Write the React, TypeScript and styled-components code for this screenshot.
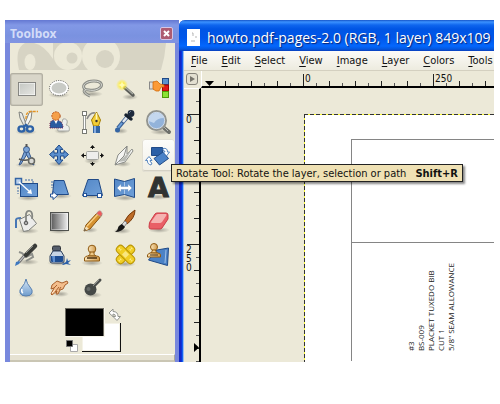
import React from "react";
import styled, { createGlobalStyle, css } from "styled-components";

const face = "#ece9d8";
const uiFont = '"DejaVu Sans Condensed", "DejaVu Sans", sans-serif';

const GlobalStyle = createGlobalStyle`
  * { box-sizing: border-box; }
  body { margin: 0; background: #fff; font-family: ${uiFont}; font-size: 11px; color: #111; }
  button { font: inherit; color: inherit; border: 0; padding: 0; margin: 0; background: none; }
`;

const Desktop = styled.main`
  display: flex;
  padding: 20px 6px 0 5px;
  overflow: hidden;
`;

const ToolboxWindow = styled.section`
  flex: none;
  display: flex;
  flex-direction: column;
  background: #7888dd;
  padding: 0 4px 0 5px;
`;

const ToolboxTitle = styled.header`
  display: flex;
  align-items: center;
  justify-content: space-between;
  height: 23px;
  margin: 0 -4px 0 -5px;
  padding: 4px 6px 0 5px;
  background: linear-gradient(#6478d2, #8298e6 5px, #7a92e0 16px, #8194e2);
  font: bold 12px/16px "Noto Sans", sans-serif;
  color: #d3dcf8;
  h2 { font: inherit; margin: 0; }
`;

const CloseButton = styled.button`
  width: 13px;
  height: 13px;
  border: 1px solid #d5c5e4;
  border-radius: 2px;
  background: #ad5b71;
  svg { display: block; }
`;

const ToolboxBody = styled.div`
  background: ${face};
  svg { display: block; }
`;

const ToolGrid = styled.div`
  display: grid;
  grid-template-columns: repeat(5, 33px);
  grid-auto-rows: 33px;
`;

const ToolCell = styled.div`
  position: relative;
`;

const ToolButton = styled.button<{ $state?: "active" | "hover" }>`
  display: block;
  width: 33px;
  height: 33px;
  border-radius: 3px;
  ${(p) => p.$state === "active" && css`
    background: #d9d6c9;
    box-shadow: inset 0 0 0 1px #b3b0a3, inset 0 0 0 2px #cbc8bb;
  `}
  ${(p) => p.$state === "hover" && css`
    background: linear-gradient(#fdfdfb, #f1efe6);
    box-shadow: inset 0 0 0 1px #e3e0d4, inset 0 -2px 0 #d4d1c4;
  `}
`;

const Tooltip = styled.div`
  position: absolute;
  z-index: 5;
  left: 29px;
  top: 25px;
  display: flex;
  gap: 9px;
  height: 18px;
  padding: 0 4px;
  border: 1px solid #222;
  background: #efe1b4;
  box-shadow: 2px 2px 2px #0007;
  font-size: 11px;
  line-height: 17px;
  white-space: nowrap;
`;

const ColorArea = styled.div`
  display: grid;
  height: 50px;
  padding: 4px 0 0 55px;
  svg { display: block; }
`;

const Dock = styled.div`
  height: 8px;
  border-top: 1px solid #fff;
  border-bottom: 2px solid #cac6b4;
  border-right: 1px solid #aaa798;
  background: #e6e2d2;
`;

const ImageWindow = styled.section`
  flex: 1;
  min-width: 0;
  display: flex;
  flex-direction: column;
  padding-left: 5px;
  background: linear-gradient(90deg, #1428c4 0 2px, #0b33dc 2px 3px, #1464ee 3px 4px, #9bbcf0 4px 5px);
  border-top-left-radius: 6px;
`;

const ImageTitle = styled.header`
  display: flex;
  align-items: center;
  gap: 7px;
  flex: none;
  height: 31px;
  margin-left: -5px;
  padding: 4px 0 0 8px;
  overflow: hidden;
  border-top-left-radius: 6px;
  background: linear-gradient(#1554c8, #3b92ff 2px, #0f66ee 5px, #0055e4 9px, #0056ea 18px, #0367fd 26px, #0458e0 29px, #0a3fbd);
  color: #fff;
  h1 {
    margin: 0;
    font: 500 14px/20px "Open Sans", "Noto Sans", sans-serif;
    white-space: nowrap;
    text-shadow: 1px 1px 1px #0a2470;
  }
  svg { flex: none; }
`;

const MenuBar = styled.nav`
  display: flex;
  gap: 14px;
  flex: none;
  height: 20px;
  padding-left: 7px;
  overflow: hidden;
  background: linear-gradient(#fcfbf8, #edebdf);
  border-bottom: 1px solid #d4d0c0;
  button { flex: none; line-height: 20px; height: 19px; }
  u { text-underline-offset: 2px; }
`;

const Workspace = styled.div`
  flex: 1;
  display: grid;
  grid-template-columns: 17px minmax(0, 1fr);
  grid-template-rows: 17px 1fr;
  background: ${face};
`;

const Corner = styled.button`
  width: 12px;
  height: 12px;
  margin: 2px;
  border: 1px solid #85837a;
  border-radius: 3px;
  background: #e3e0d1;
  svg { display: block; }
`;

const HRuler = styled.div`
  position: relative;
  display: grid;
  grid-auto-flow: column;
  grid-auto-columns: 130px;
  padding-left: 103px;
  overflow: hidden;
  border-bottom: 2px solid #000;
  border-left: 1px solid #fff;
  font-size: 10px;
  line-height: 15px;
  background:
    repeating-linear-gradient(90deg, #222 0 1px, transparent 1px 130px) 101px 3px / 100% 12px no-repeat,
    repeating-linear-gradient(90deg, #222 0 1px, transparent 1px 26px) 23px 10px / 100% 5px no-repeat,
    repeating-linear-gradient(90deg, #555 0 1px, transparent 1px 13px) 23px 12px / 100% 3px no-repeat;
`;

const VRuler = styled.div`
  position: relative;
  display: grid;
  grid-auto-rows: 130px;
  padding: 26px 0 0 2px;
  border-right: 2px solid #000;
  border-top: 1px solid #fff;
  font-size: 10px;
  line-height: 9px;
  overflow: hidden;
  height: 100%;
  max-height: 274px;
  span { width: 7px; word-break: break-all; }
  background:
    repeating-linear-gradient(#222 0 1px, transparent 1px 130px) 3px 25px / 12px 100% no-repeat,
    repeating-linear-gradient(#222 0 1px, transparent 1px 26px) 10px 25px / 5px 100% no-repeat,
    repeating-linear-gradient(#555 0 1px, transparent 1px 13px) 12px 12px / 3px 100% no-repeat;
`;

const RulerMarker = styled.svg<{ $side: "top" | "left" }>`
  position: absolute;
  ${(p) => (p.$side === "top" ? "left: 3px; bottom: 0;" : "right: 0; bottom: 10px;")}
`;

const Canvas = styled.div`
  display: grid;
  padding: 26px 0 0 103px;
`;

const Paper = styled.div`
  display: grid;
  grid-template-rows: 103px 1fr;
  padding: 25px 0 1px 47px;
  background:
    repeating-linear-gradient(90deg, #333 0 4px, #ffff3a 4px 6px) 0 0 / 100% 1px no-repeat,
    repeating-linear-gradient(#333 0 4px, #ffff3a 4px 6px) 0 0 / 1px 100% no-repeat,
    #fff;
`;

const Piece = styled.div`
  display: flex;
  align-items: flex-end;
  padding: 0 0 10px 54px;
  border: solid #858585;
  border-width: 1px 0 0 1px;
`;

const PieceLabel = styled.p`
  margin: 0;
  writing-mode: vertical-rl;
  transform: rotate(180deg);
  font: 8px/10px "Noto Sans", sans-serif;
  font-family: "Open Sans", sans-serif;
  color: #222;
  white-space: nowrap;
`;

const blue = "#3465a4";
const Sheet = { fill: "url(#sheet)", stroke: "#204a87" };

const Defs = () => (
  <defs>
    <linearGradient id="sheet" x1="0" y1="0" x2="1" y2="1"><stop stopColor="#5488c7" /><stop offset="1" stopColor="#6f9fd8" /></linearGradient>
    <linearGradient id="metal" x1="0" y1="0" x2="1" y2="1"><stop stopColor="#c4c7c2" /><stop offset="1" stopColor="#e6e6e2" /></linearGradient>
    <linearGradient id="ramp"><stop stopColor="#555" /><stop offset="1" stopColor="#f4f4f4" /></linearGradient>
    <linearGradient id="wood" x1="0" y1="0" x2="1" y2="0"><stop stopColor="#fbe6bb" /><stop offset="1" stopColor="#d09a4c" /></linearGradient>
    <radialGradient id="glow"><stop stopColor="#fffff0" /><stop offset=".4" stopColor="#fcec4f" /><stop offset="1" stopColor="#fcec4f" stopOpacity="0" /></radialGradient>
    <linearGradient id="water" x1="0" y1="0" x2="0" y2="1"><stop stopColor="#d8e8f8" /><stop offset="1" stopColor="#6f9ccc" /></linearGradient>
    <radialGradient id="shade"><stop stopColor="#000" stopOpacity=".3" /><stop offset="1" stopColor="#000" stopOpacity="0" /></radialGradient>
  </defs>
);

const Shade = ({ y = 25, x = 16, r = 11 }: { y?: number; x?: number; r?: number }) => (
  <ellipse cx={x} cy={y} rx={r} ry="3" fill="url(#shade)" />
);

type Tool = { name: string; art: React.ReactNode; state?: "active" | "hover"; tip?: boolean };

const tools: Tool[] = [
  { name: "Rectangle Select", state: "active", art: <><rect x="9" y="10" width="16" height="12" fill="url(#metal)" stroke="#fff" /><rect x="8.500" y="9.500" width="17" height="13" fill="none" stroke="#222" strokeDasharray="1 1" /></> },
  { name: "Ellipse Select", art: <><Shade y={22} /><ellipse cx="16" cy="15" rx="8.500" ry="6.500" fill="#c9cbc6" stroke="#fff" strokeWidth="2" /><ellipse cx="16" cy="15" rx="9.500" ry="7.500" fill="none" stroke="#555" strokeDasharray="1 1.3" /></> },
  { name: "Free Select", art: <><Shade y={21} /><g fill="none"><path d="M10 17C4 13 10 8 18 8s10 5 4 8-10 0-13 1 2 5 5 6" stroke="#8a8c85" strokeWidth="3" /><path d="M10 17C4 13 10 8 18 8s10 5 4 8-10 0-13 1 2 5 5 6" stroke="#d8d9d3" /></g></> },
  { name: "Fuzzy Select", art: <><Shade y={24} x={21} r={8} /><path d="M15 14l9 8" stroke="#5b5d59" strokeWidth="3.4" strokeLinecap="round" /><path d="M16 14l8 7" stroke="#aaada6" strokeWidth="1.2" /><circle cx="13" cy="12" r="6" fill="url(#glow)" /><path d="M13 8l1 3 3 1-3 1-1 3-1-3-3-1 3-1z" fill="#fffbb0" /></> },
  { name: "Select by Color", art: <><rect x="20.500" y="5.500" width="6" height="6" fill="#5b91cf" stroke="#204a87" /><rect x="20.500" y="12" width="6" height="6" fill="#e01818" stroke="#a40000" /><rect x="20.500" y="18.500" width="6" height="6" fill="#8ae234" stroke="#4e9a06" /><rect x="7.500" y="9" width="4" height="7" fill="#ddd" stroke="#888" /><path d="M11 9l4-1 3 3 4 1v2h-3l-2 4h-3l-3-2z" fill="#fb9a37" stroke="#d2690a" strokeWidth=".8" /></> },
  { name: "Scissors Select", art: <><Shade y={26} /><path d="M9 6l3 1 4 11-2 2-4-8z" fill="#e8e9e6" stroke="#82847f" /><path d="M22 5l-3 2-4 10 2 3 4-7z" fill="#f6f6f4" stroke="#82847f" /><path d="M16 13c0-5 1-7 4-7.500h8" fill="none" stroke="#e59320" strokeWidth="1.300" strokeDasharray="3 1" /><g fill="none" stroke="#2d62a7" strokeWidth="2.400"><ellipse cx="11.500" cy="23" rx="3" ry="2.600" /><ellipse cx="20" cy="23" rx="3" ry="2.600" /><path d="M13 21l3-2 2 2" /></g></> },
  { name: "Foreground Select", art: <><Shade y={25} x={19} r={8} /><path d="M20 13c5-1 5 4 3 6 3 0 4 3 3 6H15c-1-4 1-6 3-6z" fill="#eeeeec" stroke="#a6a8a3" /><path d="M7 22v-5q1-3 5-3t6 2 2 6z" fill="#2c5ba0" stroke="#702050" strokeDasharray="1 1" /><path d="M11 14l2 4 2-4z" fill="#fff" /><circle cx="13" cy="10" r="4.200" fill="#f5a04a" stroke="#b4521c" strokeDasharray="2 1" /></> },
  { name: "Paths", art: <><path d="M8.500 8v17" stroke="#999b95" strokeWidth="3" /><path d="M8.500 8v17" stroke="#fff" /><path d="M11 13Q14 6 19 7" fill="none" stroke="#888" strokeWidth="1.500" /><g fill="#fff" stroke="#777973"><rect x="6.500" y="5.500" width="4" height="4" /><rect x="6.500" y="23.500" width="4" height="4" /></g><path d="M20.500 6l4 8-2 6h-5l-2-6z" fill="#f2cc35" stroke="#a47e04" /><path d="M20.500 7v7" stroke="#fff7b8" strokeWidth="1.500" /><circle cx="20.500" cy="15" r="1.200" fill="#333" /><path d="M17 20h7v7h-7z" fill={blue} /><path d="M18 20h2v7h-2z" fill="#86ace0" /></> },
  { name: "Color Picker", art: <><Shade y={25} x={12} r={7} /><path d="M19 10L9 22" stroke="#3a5f94" strokeWidth="4" /><path d="M19 10l-5 6" stroke="#e3e8ee" strokeWidth="2.500" /><path d="M13 17l-4 5" stroke="#6ca0dc" strokeWidth="2" /><ellipse cx="8.500" cy="24" rx="2.500" ry="2.500" fill={blue} /><path d="M17 9l5 4" stroke="#17212f" strokeWidth="3.500" strokeLinecap="round" /><circle cx="22" cy="7.500" r="3.400" fill="#1d2a3d" /><path d="M20 7l2-2" stroke="#6b7990" /></> },
  { name: "Zoom", art: <><Shade y={26} x={19} /><path d="M21 21l6 5" stroke="#6e706b" strokeWidth="4" strokeLinecap="round" /><path d="M22 21l4 4" stroke="#b9bbb6" /><circle cx="14.500" cy="14.500" r="9.500" fill="#93b3da" stroke="#92948f" strokeWidth="2" /><path d="M6.500 15A8 8 0 0 1 22 12Q15 12 12 17z" fill="#c4d7ee" /><circle cx="14.500" cy="14.500" r="8.200" fill="none" stroke="#e6ebf0" strokeWidth=".7" /></> },
  { name: "Measure", art: <><Shade y={26} /><path d="M15 11l-6 15 2-1 6-10z" fill="#7ba3d5" stroke="#34568a" /><path d="M18 11l6 15-2-1-6-10z" fill="#7ba3d5" stroke="#34568a" /><path d="M9 20q7 3 14-1" stroke="#555" strokeWidth="1.600" fill="none" /><circle cx="16.500" cy="10.500" r="3" fill="#7ba3d5" stroke="#34568a" /><path d="M16.500 5v3" stroke="#555" strokeWidth="2" /><circle cx="21.500" cy="22" r="3" fill="#d9dad7" stroke="#666863" strokeWidth="1.500" /></> },
  { name: "Move", art: <><Shade y={25} /><path d="M16 6l4 4.500h-2.500V14H21v-2.500l4.500 4-4.500 4V17h-3.500v4H20l-4 4.500-4-4.500h2.500v-4H11v2.500l-4.500-4 4.500-4V14h3.500v-3.500H12z" fill="#5b8fce" stroke="#1f4b8b" /></> },
  { name: "Align", art: <><Shade y={22} r={8} /><rect x="10.500" y="12.500" width="12" height="8" rx="1" fill="#eeeeec" stroke="#a3a59f" /><g fill="#111"><path d="M16.500 6l2.500 3h-5zM16.500 27l2.500-3h-5zM5 16.500l3-2.500v5zM28 16.500l-3-2.500v5z" /><path d="M16 8h1v2h-1zM16 23h1v2h-1zM8 16h2v1H8zM24 16h2v1h-2z" /></g></> },
  { name: "Crop", art: <><Shade y={25} x={14} r={8} /><path d="M6 26l3-10 9-9v8l5-5 1 2-8 11z" fill="#f4f4f2" stroke="#8b8d88" /><path d="M6 26l9-9 3-10" fill="none" stroke="#8b8d88" /><path d="M9 23l6-5 3-3 5-5-7 12z" fill="#b8bab5" /></> },
  { name: "Rotate", state: "hover", tip: true, art: <><path d="M9.500 8.500h11v8h-11z" fill="#2b5fa6" stroke="#204a87" /><path d="M12 19.500l9-6.500 5.500 6.500-9 6.500z" fill="#4a82c8" stroke="#204a87" /><path d="M21 9.500q4.500-1 4.500 3.500h2l-3 4-3.500-4h2q0-1.500-2-1.500zM9 26q-4-1-3.500-4.500h-2L7 17.500l3 4H8q0 2 2 2.500z" fill="#fff" stroke="#4a7dbb" strokeWidth=".9" /></> },
  { name: "Scale", art: <><Shade y={26} x={18} /><rect x="10.500" y="11.500" width="17" height="13" {...Sheet} /><path d="M15 8h8v3M8 15v7" fill="none" stroke="#3e6ba8" strokeDasharray="2 1" /><rect x="5.500" y="6.500" width="6" height="6" fill="#bcd3ee" stroke={blue} strokeWidth="1.500" /><path d="M9 10l11 10" stroke="#fff" strokeWidth="1.300" /><path d="M22 22l-5-1 4-4z" fill="#fff" /></> },
  { name: "Shear", art: <><Shade y={24} x={18} /><path d="M11 8.500h10l4.500 14H9.500z" {...Sheet} /><path d="M9 9v7" stroke="#3e6ba8" strokeDasharray="2 1" /><path d="M7.500 22h2.500v-2.500l4.500 4-4.500 4V25H7.500z" fill="#fff" stroke="#245398" /></> },
  { name: "Perspective", art: <><Shade y={24} /><path d="M12 7.500h10.500l4 16h-20z" {...Sheet} /><g fill="#fff" stroke="#245398"><rect x="7.500" y="21.500" width="3" height="3" /><rect x="21.500" y="21.500" width="4" height="4" /></g></> },
  { name: "Flip", art: <><Shade y={26} /><path d="M5.500 7l10 2.500 10-3v19l-10-3-10 2z" {...Sheet} /><path d="M15.500 10v12" stroke="#adc8e8" /><path d="M8 16l4-4v2.500h7V12l4 4-4 4v-2.500h-7V20z" fill="#fff" stroke="#7294c0" strokeWidth=".5" /></> },
  { name: "Text", art: <><Shade y={25} /><text x="16.500" y="25" textAnchor="middle" fontFamily="DejaVu Sans" fontWeight="bold" fontSize="27" fill="#303331" stroke="#303331">A</text></> },
  { name: "Bucket Fill", art: <><Shade y={26} x={18} /><path d="M6 23v-8q0-2 5-2" fill="none" stroke="#4777b5" strokeWidth="2" /><path d="M9.500 14.500l10-5 7 9-8 7-5 1z" fill="#ececea" stroke="#7d7f7a" /><path d="M16 17V9q1-4 4-3t2 8" fill="none" stroke="#858782" strokeWidth="1.800" /><circle cx="16" cy="18" r="1.800" fill="#aaa" stroke="#555" /></> },
  { name: "Blend", art: <><Shade y={26} /><rect x="7.500" y="7.500" width="18" height="18" fill="url(#ramp)" stroke="#50524e" /><rect x="8.500" y="8.500" width="16" height="16" fill="none" stroke="#fff" strokeOpacity=".4" /></> },
  { name: "Pencil", art: <><Shade y={25} x={14} r={8} /><path d="M8 26l2-6L22 7l4 3-12 14z" fill="#d5912f" stroke="#85500e" /><path d="M11 21l11-12" stroke="#f8cf83" strokeWidth="1.300" /><path d="M20.500 8.500L22.500 6q2-1 3 1l1 2-2 2.500z" fill="#ee5b5b" stroke="#aaa" strokeWidth=".7" /><path d="M8 26l2-5 3 3z" fill="#f3dfb8" /><path d="M8 26l1-2 1 1z" fill="#222" /></> },
  { name: "Paintbrush", art: <><Shade y={26} x={13} r={9} /><path d="M15 17q4-8 11-12 0 8-8 14z" fill="#bd6c28" stroke="#793b0b" /><path d="M12 20l4-4 2 2-3 4z" fill="#ddd" stroke="#888" /><path d="M13 19l3 3q-3 5-10 5 3-2 3-4t4-4z" fill="#171717" /></> },
  { name: "Eraser", art: <><Shade y={25} x={17} /><path d="M7.500 17.500L13 9q1-1 2-1h9q2 0 2 2v4l-6 9q-1 1-2 1h-9q-2 0-2-2z" fill="#e95f66" stroke="#cb3d47" /><path d="M9 17l5-7q1-1 2-1h8q1 1 0 2l-4 6q-1 1-2 1h-8q-1 0-1-1z" fill="#f5b3b1" /></> },
  { name: "Airbrush", art: <><Shade y={24} x={18} /><path d="M9 14l3 1 4 4 6-3 1 3-7 4" fill="none" stroke="#8d8f8a" strokeWidth="2" /><path d="M15 17l-6 7" stroke="#777" strokeWidth="3" /><path d="M15 17l-6 7" stroke="#ddd" /><path d="M16 17l9-9" stroke="#393b38" strokeWidth="4.500" strokeLinecap="round" /><path d="M16 15l7-7" stroke="#8b8d88" /><path d="M5 28l1-4 3-1q2 1 0 3z" fill="#3e78bf" /></> },
  { name: "Ink", art: <><Shade y={25} x={15} /><rect x="9.500" y="8" width="8" height="5" rx="1.500" fill="#555d6b" stroke="#2a2e35" /><path d="M10 13h8l3 5v5q0 2-2 2H9q-2 0-2-2v-5z" fill="#c7d4e4" stroke="#2c3f5c" /><path d="M8 18h12v5q0 1-1 1H9q-1 0-1-1z" fill="#1e4d92" /><path d="M9 18h3v6h-2z" fill="#5f8fd0" /><path d="M19 26l4-2 1-4 1 3 3-1-3 3 3 2-5-1-3 1z" fill="#2b5fa8" /></> },
  { name: "Clone", art: <><Shade y={25} /><circle cx="16" cy="11" r="3.800" fill="url(#wood)" stroke="#8f5a12" /><path d="M14 14q1 3-2 4h8q-3-1-2-4z" fill="#eec987" stroke="#8f5a12" /><path d="M8.500 23v-3q1-2 3-2h9q3 0 3 2v3z" fill="url(#wood)" stroke="#8f5a12" /><path d="M11 20h10" stroke="#4d3211" strokeWidth="1.500" /></> },
  { name: "Heal", art: <><Shade y={26} /><g fill="#f0cd24" stroke="#b99504"><rect x="5.500" y="12.500" width="22" height="8" rx="3.500" transform="rotate(-45 16.500 16.500)" /><rect x="5.500" y="12.500" width="22" height="8" rx="3.500" transform="rotate(45 16.500 16.500)" /></g><path d="M16.500 13l3.500 3.500-3.500 3.500-3.500-3.500z" fill="#f9e680" /><path d="M10 10l2 2m9 9l2 2m0-13l-2 2m-9 9l-2 2" stroke="#fcef9c" strokeDasharray="1 1" strokeWidth="2" /></> },
  { name: "Perspective Clone", art: <><path d="M15 12l11.500-2-1 17.500L6.500 22z" {...Sheet} fill="#4b82c6" /><path d="M24 12l-1 13" stroke="#9ec0e8" /><circle cx="12" cy="9" r="3.500" fill="url(#wood)" stroke="#8f5a12" /><path d="M10.500 12q0 2-2 3h7q-2-1-2-3z" fill="#eec987" stroke="#8f5a12" /><path d="M5.500 19v-2q1-2 3-2h7q3 0 3 2v2z" fill="url(#wood)" stroke="#8f5a12" /><path d="M8 17h8" stroke="#4d3211" /></> },
  { name: "Blur / Sharpen", art: <><Shade y={24} x={17} r={9} /><path d="M16 8q1 5 4 8 3 3 2 6-1 3-6 3t-6-3q-1-3 2-6 3-3 4-8z" fill="url(#water)" stroke="#5880b0" /><path d="M12 18q-1 3 1 4" stroke="#fff" strokeWidth="1.500" fill="none" /></> },
  { name: "Smudge", art: <><Shade y={23} x={18} r={8} /><path d="M24 10l-5 2-5-2-5 4-1 4 3-1-3 6 1 1 5-4-1 3 2 0 2-4 3-1 2-4 3-2z" fill="#f3bd8b" stroke="#a9602c" /><path d="M11 17l3-3m-2 7l4-5m0 3l2-3" stroke="#a9602c" fill="none" /><path d="M9 22l3-3" stroke="#ffe4c8" /></> },
  { name: "Dodge / Burn", art: <><Shade y={24} x={17} r={9} /><path d="M17 16l7-7" stroke="#4a4d4b" strokeWidth="3" strokeLinecap="round" /><circle cx="14.500" cy="18.500" r="6" fill="#454947" /><path d="M17 15l6-6" stroke="#8b8e8b" /><circle cx="12.500" cy="18" r="2" fill="#676b69" /></> },
];

const menus = ["File", "Edit", "Select", "View", "Image", "Layer", "Colors", "Tools"];

const WilberBanner = () => (
  <svg width="165" height="30" viewBox="0 0 165 30" aria-hidden="true">
    <path d="M15 0h141q-1 14-5 27H9Q4 6 15 0z" fill="#d7d4c4" />
    <path d="M24 0q10 2 19 16V0z" fill={face} />
    <ellipse cx="20" cy="19" rx="5.500" ry="8" fill={face} />
    <circle cx="58" cy="13" r="14" fill={face} />
    <circle cx="62" cy="15" r="5.500" fill="#d7d4c4" />
    <circle cx="91" cy="13" r="19" fill={face} />
    <circle cx="95" cy="16" r="9" fill="#d7d4c4" />
    <path d="M0 27h165v3H0z" fill={face} />
  </svg>
);

export default function App() {
  return (
    <Desktop>
      <GlobalStyle />
      <ToolboxWindow>
        <ToolboxTitle>
          <h2>Toolbox</h2>
          <CloseButton aria-label="Close">
            <svg width="11" height="11" viewBox="0 0 11 11"><path d="M3 3l5 5m0-5l-5 5" stroke="#fff" strokeWidth="2" /></svg>
          </CloseButton>
        </ToolboxTitle>
        <ToolboxBody>
          <WilberBanner />
          <svg width="0" height="0"><Defs /></svg>
          <ToolGrid>
            {tools.map((t) => (
              <ToolCell key={t.name}>
                <ToolButton $state={t.state} aria-label={t.name}>
                  <svg width="33" height="33" viewBox="0 0 33 33">{t.art}</svg>
                </ToolButton>
                {t.tip && (
                  <Tooltip role="tooltip">
                    <span>Rotate Tool: Rotate the layer, selection or path</span>
                    <b>Shift+R</b>
                  </Tooltip>
                )}
              </ToolCell>
            ))}
          </ToolGrid>
          <ColorArea>
            <svg width="60" height="45" viewBox="0 0 60 45" role="img" aria-label="Foreground and background colors">
              <path d="M17 15h39v29H17z" fill="#111" /><path d="M17 15h38v28H17z" fill="#f5f3e8" /><path d="M18 16h36v26H18z" fill="#fff" />
              <path d="M0 0h40v29H0z" fill="#f7f5ec" /><path d="M0 0h39v28H0z" fill="#6d6b62" /><path d="M1 1h37v27H1z" fill="#000" />
              <path d="M5.500 36.500h7v7h-7z" fill="#fff" stroke="#aaa" /><path d="M1.500 32.500h6v6h-6z" fill="#000" stroke="#777" />
              <path d="M44 5l4-4v2.500q5 0 5 5h2.500L52 12.500 48 8.500h2.500q0-2.500-2.500-2.500v2.500z" fill="#fff" stroke="#92948f" />
            </svg>
          </ColorArea>
          <Dock />
        </ToolboxBody>
      </ToolboxWindow>
      <ImageWindow>
        <ImageTitle>
          <svg width="13" height="17" viewBox="0 0 13 17" aria-hidden="true"><path d="M0 0h13v17H0z" fill="#fff" /><path d="M5 4h1v3M4 12h4M9 7v2" stroke="#b5b5b5" fill="none" /></svg>
          <h1>howto.pdf-pages-2.0 (RGB, 1 layer) 849x109</h1>
        </ImageTitle>
        <MenuBar>
          {menus.map((m) => (
            <button key={m}><u>{m[0]}</u>{m.slice(1)}</button>
          ))}
        </MenuBar>
        <Workspace>
          <Corner aria-label="Image menu">
            <svg width="10" height="10" viewBox="0 0 10 10"><path d="M3 2l5 3-5 3z" fill="#77756c" /></svg>
          </Corner>
          <HRuler>
            <RulerMarker $side="top" width="9" height="5" viewBox="0 0 9 5"><path d="M0 0h9L4.500 5z" /></RulerMarker>
            <span>0</span><span>250</span>
          </HRuler>
          <VRuler>
            <span>0</span><span>250</span>
            <RulerMarker $side="left" width="5" height="9" viewBox="0 0 5 9"><path d="M0 0v9l5-4.500z" /></RulerMarker>
          </VRuler>
          <Canvas>
            <Paper>
              <Piece />
              <Piece>
                <PieceLabel>#3<br />BS-009<br />PLACKET TUXEDO BIB<br />CUT 1<br />5/8" SEAM ALLOWANCE</PieceLabel>
              </Piece>
            </Paper>
          </Canvas>
        </Workspace>
      </ImageWindow>
    </Desktop>
  );
}
